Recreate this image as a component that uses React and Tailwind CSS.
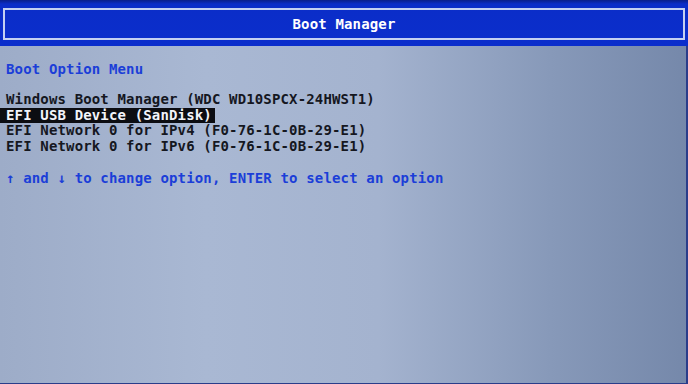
import React from 'react';

const mono = { fontFamily: '"DejaVu Sans Mono", "Liberation Mono", monospace' };

const entries = [
  { label: 'Windows Boot Manager (WDC WD10SPCX-24HWST1)' },
  { label: 'EFI USB Device (SanDisk)', active: true },
  { label: 'EFI Network 0 for IPv4 (F0-76-1C-0B-29-E1)' },
  { label: 'EFI Network 0 for IPv6 (F0-76-1C-0B-29-E1)' },
];

export default function App() {
  return (
    <div
      className="w-[688px] h-[384px] flex flex-col overflow-hidden font-bold text-[14px] tracking-[0.15px] bg-[linear-gradient(90deg,#9dacc8_0%,#a9b8d3_30%,#a4b3cf_55%,#8799b9_80%,#7588aa_100%)]"
      style={mono}
    >
      {/* title bar */}
      <div className="h-[46px] shrink-0 bg-[linear-gradient(180deg,#0a1f8a_0px,#0b2dc8_4px,#0b2ecc_100%)] pt-[8px] pl-[3px] pr-[3px]">
        <div className="h-[32px] border-2 border-[#c4d0f2] flex items-center justify-center text-white">
          Boot Manager
        </div>
      </div>

      {/* menu body */}
      <div className="flex-1 flex flex-col pt-[16px] leading-[15.5px] shadow-[inset_-2px_-1px_0_#2a3d8a]">
        <div className="pl-[6px] text-[#1b3ed8]">Boot Option Menu</div>

        <div className="mt-[14.5px] flex flex-col text-[#15171f]">
          {entries.map((e) =>
            e.active ? (
              <div key={e.label} className="flex">
                <span className="bg-[#0c0d12] text-[#f2f4fa] pl-[6px] pr-[3px]">{e.label}</span>
              </div>
            ) : (
              <div key={e.label} className="pl-[6px]">
                {e.label}
              </div>
            )
          )}
        </div>

        <div className="mt-[16.5px] pl-[6px] text-[#1b3ed8]">
          ↑ and ↓ to change option, ENTER to select an option
        </div>
      </div>
    </div>
  );
}
